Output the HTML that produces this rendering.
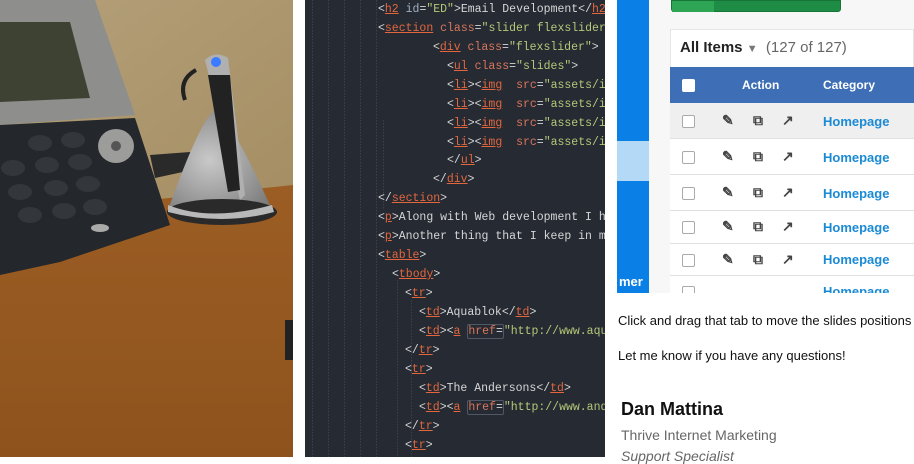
<!DOCTYPE html>
<html><head><meta charset="utf-8"><style>
*{margin:0;padding:0;box-sizing:border-box}
body{width:914px;height:457px;overflow:hidden;background:#fff;position:relative;font-family:"Liberation Sans",sans-serif}
.p{position:absolute;overflow:hidden}
#code{left:305px;top:0;width:300px;height:457px;background:#262a33;font-family:"Liberation Mono",monospace;font-size:11.5px;color:#d6d6d6}
#code .l{position:absolute;white-space:pre;line-height:19px}
.t{color:#e2673e;text-decoration:underline}
.a{color:#d8765c}
.i{color:#9fb0c0}
.s{color:#b4c878}
.g{position:absolute;top:0;width:1px;height:457px;background-image:linear-gradient(#3c414c 50%,transparent 50%);background-size:1px 3px}
.box{border:1px solid #505866;border-radius:2px}
#right{left:605px;top:0;width:309px;height:457px;background:#fff}
.row{position:absolute;left:670px;width:244px;border-bottom:1px solid #e0e0e0;background:#fff}
.cb{position:absolute;left:12px;width:13px;height:13px;border:1px solid #aaa;border-radius:2px;background:#fff}
.hp{position:absolute;left:153px;color:#1a8ad4;font-weight:bold;font-size:13px}
.ic{position:absolute;font-size:14px;color:#444;font-weight:bold}
</style></head><body>
<div class="p" style="left:0;top:0;width:293px;height:457px">
<svg width="293" height="457" viewBox="0 0 293 457">
<defs>
<linearGradient id="w" x1="0" y1="0" x2="1" y2="1"><stop offset="0" stop-color="#b4a07a"/><stop offset="1" stop-color="#a58d62"/></linearGradient>
<linearGradient id="d" x1="0" y1="0" x2="0" y2="1"><stop offset="0" stop-color="#a46428"/><stop offset="1" stop-color="#8e531d"/></linearGradient>
<radialGradient id="sv" cx=".4" cy=".5" r=".7"><stop offset="0" stop-color="#c9c9c9"/><stop offset="1" stop-color="#7a7a7a"/></radialGradient>
</defs>
<rect width="293" height="457" fill="url(#d)"/>
<polygon points="0,0 293,0 293,185 150,200 0,215" fill="url(#w)"/>
<polygon points="0,0 95,0 135,115 0,125" fill="#8e8e8c"/>
<polygon points="0,22 70,22 90,98 0,102" fill="#3d4232"/>
<polygon points="0,125 135,118 170,225 60,262 0,275" fill="#24272b"/>
<ellipse cx="116" cy="146" rx="18" ry="17" fill="#9c9c9a"/>
<circle cx="116" cy="146" r="5" fill="#555"/>
<g fill="#33373c"><ellipse cx="40" cy="143" rx="12" ry="8"/><ellipse cx="73" cy="140" rx="12" ry="8"/><ellipse cx="13" cy="168" rx="12" ry="8"/><ellipse cx="47" cy="165" rx="12" ry="8"/><ellipse cx="80" cy="162" rx="12" ry="8"/><ellipse cx="20" cy="192" rx="12" ry="8"/><ellipse cx="56" cy="188" rx="12" ry="8"/><ellipse cx="88" cy="184" rx="12" ry="8"/><ellipse cx="30" cy="215" rx="12" ry="8"/><ellipse cx="64" cy="211" rx="12" ry="8"/><ellipse cx="95" cy="207" rx="12" ry="8"/></g>
<ellipse cx="100" cy="228" rx="9" ry="4" fill="#aaa"/>
<polygon points="150,155 190,152 192,170 155,178" fill="#2a2a2a"/>
<path d="M168,210 Q200,120 215,110 Q232,120 272,210 Z" fill="url(#sv)"/>
<ellipse cx="222" cy="212" rx="55" ry="13" fill="#2a2a2a"/>
<path d="M168,205 Q210,222 272,205 L274,212 Q222,226 168,212 Z" fill="#b9b9b9"/>
<path d="M205,60 Q215,50 228,58 L245,195 L240,200 Q225,140 205,60 Z" fill="#b0b0b0"/>
<path d="M208,75 L230,75 L240,190 L228,192 Z" fill="#222"/>
<circle cx="216" cy="62" r="5" fill="#3a7bff"/>
<path d="M196,70 Q178,80 185,100" stroke="#222" stroke-width="4" fill="none"/>
<rect x="285" y="320" width="8" height="40" fill="#222"/>
</svg>
</div>

<div class="p" id="code">
<div class="g" style="left:7px"></div><div class="g" style="left:23px"></div><div class="g" style="left:39px"></div><div class="g" style="left:55px"></div><div class="g" style="left:71px"></div>
<div class="g" style="left:78px;top:120px;height:90px"></div><div class="g" style="left:92px;top:280px;height:177px"></div><div class="g" style="left:106px;top:300px;height:157px"></div>
<div class="l" style="left:73px;top:0">&lt;<span class="t">h2</span> <span class="i">id</span>=<span class="s">"ED"</span>&gt;Email Development&lt;/<span class="t">h2</span></div>
<div class="l" style="left:73px;top:19px">&lt;<span class="t">section</span> <span class="a">class</span>=<span class="s">"slider flexslider</span></div>
<div class="l" style="left:128px;top:38px">&lt;<span class="t">div</span> <span class="a">class</span>=<span class="s">"flexslider"</span>&gt;</div>
<div class="l" style="left:142px;top:57px">&lt;<span class="t">ul</span> <span class="a">class</span>=<span class="s">"slides"</span>&gt;</div>
<div class="l" style="left:142px;top:76px">&lt;<span class="t">li</span>&gt;&lt;<span class="t">img</span>  <span class="a">src</span>=<span class="s">"assets/i</span></div>
<div class="l" style="left:142px;top:95px">&lt;<span class="t">li</span>&gt;&lt;<span class="t">img</span>  <span class="a">src</span>=<span class="s">"assets/i</span></div>
<div class="l" style="left:142px;top:114px">&lt;<span class="t">li</span>&gt;&lt;<span class="t">img</span>  <span class="a">src</span>=<span class="s">"assets/i</span></div>
<div class="l" style="left:142px;top:133px">&lt;<span class="t">li</span>&gt;&lt;<span class="t">img</span>  <span class="a">src</span>=<span class="s">"assets/i</span></div>
<div class="l" style="left:142px;top:151px">&lt;/<span class="t">ul</span>&gt;</div>
<div class="l" style="left:128px;top:170px">&lt;/<span class="t">div</span>&gt;</div>
<div class="l" style="left:73px;top:189px">&lt;/<span class="t">section</span>&gt;</div>
<div class="l" style="left:73px;top:208px">&lt;<span class="t">p</span>&gt;Along with Web development I h</div>
<div class="l" style="left:73px;top:227px">&lt;<span class="t">p</span>&gt;Another thing that I keep in m</div>
<div class="l" style="left:73px;top:246px">&lt;<span class="t">table</span>&gt;</div>
<div class="l" style="left:87px;top:265px">&lt;<span class="t">tbody</span>&gt;</div>
<div class="l" style="left:100px;top:284px">&lt;<span class="t">tr</span>&gt;</div>
<div class="l" style="left:114px;top:303px">&lt;<span class="t">td</span>&gt;Aquablok&lt;/<span class="t">td</span>&gt;</div>
<div class="l" style="left:114px;top:322px">&lt;<span class="t">td</span>&gt;&lt;<span class="t">a</span> <span class="box"><span class="a">href</span>=</span><span class="s">"http://www.aqu</span></div>
<div class="l" style="left:100px;top:341px">&lt;/<span class="t">tr</span>&gt;</div>
<div class="l" style="left:100px;top:360px">&lt;<span class="t">tr</span>&gt;</div>
<div class="l" style="left:114px;top:379px">&lt;<span class="t">td</span>&gt;The Andersons&lt;/<span class="t">td</span>&gt;</div>
<div class="l" style="left:114px;top:398px">&lt;<span class="t">td</span>&gt;&lt;<span class="t">a</span> <span class="box"><span class="a">href</span>=</span><span class="s">"http://www.and</span></div>
<div class="l" style="left:100px;top:417px">&lt;/<span class="t">tr</span>&gt;</div>
<div class="l" style="left:100px;top:436px">&lt;<span class="t">tr</span>&gt;</div>
</div>

<div class="p" id="right">
<div style="position:absolute;left:12px;top:0;width:32px;height:293px;background:#0a7fe6"></div>
<div style="position:absolute;left:12px;top:141px;width:32px;height:40px;background:#b3d9f7"></div>
<div style="position:absolute;left:14px;top:274px;color:#fff;font-size:13px;font-weight:bold">mer</div>
<div style="position:absolute;left:44px;top:0;width:265px;height:293px;background:#f7f7f7"></div>
</div>
<div style="position:absolute;left:671px;top:0;width:170px;height:12px;background:#1e8c45;border-radius:0 0 3px 3px;border:1px solid #177538"><div style="width:42px;height:11px;background:#2ea554"></div></div>
<div style="position:absolute;left:670px;top:29px;width:244px;height:264px;background:#fff;border:1px solid #e6e6e6"></div>
<div style="position:absolute;left:680px;top:39px;font-size:15px;font-weight:bold;color:#222">All Items <span style="color:#777;font-size:11px;font-weight:normal">&#9660;</span> <span style="font-weight:normal;color:#666;font-size:15px">&nbsp;(127 of 127)</span></div>
<div class="row" style="top:67px;height:36px;background:#3e6fb6;border:none">
<div class="cb" style="top:12px;border-color:#fff"></div>
<div style="position:absolute;left:72px;top:11px;color:#fff;font-size:12px;font-weight:bold">Action</div>
<div style="position:absolute;left:153px;top:11px;color:#fff;font-size:12px;font-weight:bold">Category</div>
</div>
<div class="row" style="top:103px;height:36px;background:#efefef"><div class="cb" style="top:12px"></div><span class="ic" style="left:52px;top:9px">&#9998;</span><span class="ic" style="left:83px;top:9px">&#10697;</span><span class="ic" style="left:112px;top:9px">&#8599;</span><div class="hp" style="top:11px">Homepage</div></div>
<div class="row" style="top:139px;height:36px"><div class="cb" style="top:12px"></div><span class="ic" style="left:52px;top:9px">&#9998;</span><span class="ic" style="left:83px;top:9px">&#10697;</span><span class="ic" style="left:112px;top:9px">&#8599;</span><div class="hp" style="top:11px">Homepage</div></div>
<div class="row" style="top:175px;height:36px"><div class="cb" style="top:12px"></div><span class="ic" style="left:52px;top:9px">&#9998;</span><span class="ic" style="left:83px;top:9px">&#10697;</span><span class="ic" style="left:112px;top:9px">&#8599;</span><div class="hp" style="top:11px">Homepage</div></div>
<div class="row" style="top:211px;height:33px"><div class="cb" style="top:10px"></div><span class="ic" style="left:52px;top:7px">&#9998;</span><span class="ic" style="left:83px;top:7px">&#10697;</span><span class="ic" style="left:112px;top:7px">&#8599;</span><div class="hp" style="top:9px">Homepage</div></div>
<div class="row" style="top:244px;height:32px"><div class="cb" style="top:10px"></div><span class="ic" style="left:52px;top:7px">&#9998;</span><span class="ic" style="left:83px;top:7px">&#10697;</span><span class="ic" style="left:112px;top:7px">&#8599;</span><div class="hp" style="top:8px">Homepage</div></div>
<div class="row" style="top:276px;height:17px;border:none;overflow:hidden"><div class="cb" style="top:10px"></div><div class="hp" style="top:8px">Homepage</div></div>
<div style="position:absolute;left:605px;top:293px;width:309px;height:164px;background:#fff">
<div style="position:absolute;left:13px;top:20px;font-size:13px;color:#111;white-space:nowrap">Click and drag that tab to move the slides positions</div>
<div style="position:absolute;left:13px;top:55px;font-size:13px;color:#111">Let me know if you have any questions!</div>
<div style="position:absolute;left:16px;top:106px;font-size:18px;font-weight:bold;color:#111">Dan Mattina</div>
<div style="position:absolute;left:16px;top:134px;font-size:14px;color:#666">Thrive Internet Marketing</div>
<div style="position:absolute;left:16px;top:155px;font-size:14px;color:#666;font-style:italic">Support Specialist</div>
</div>
</body></html>
